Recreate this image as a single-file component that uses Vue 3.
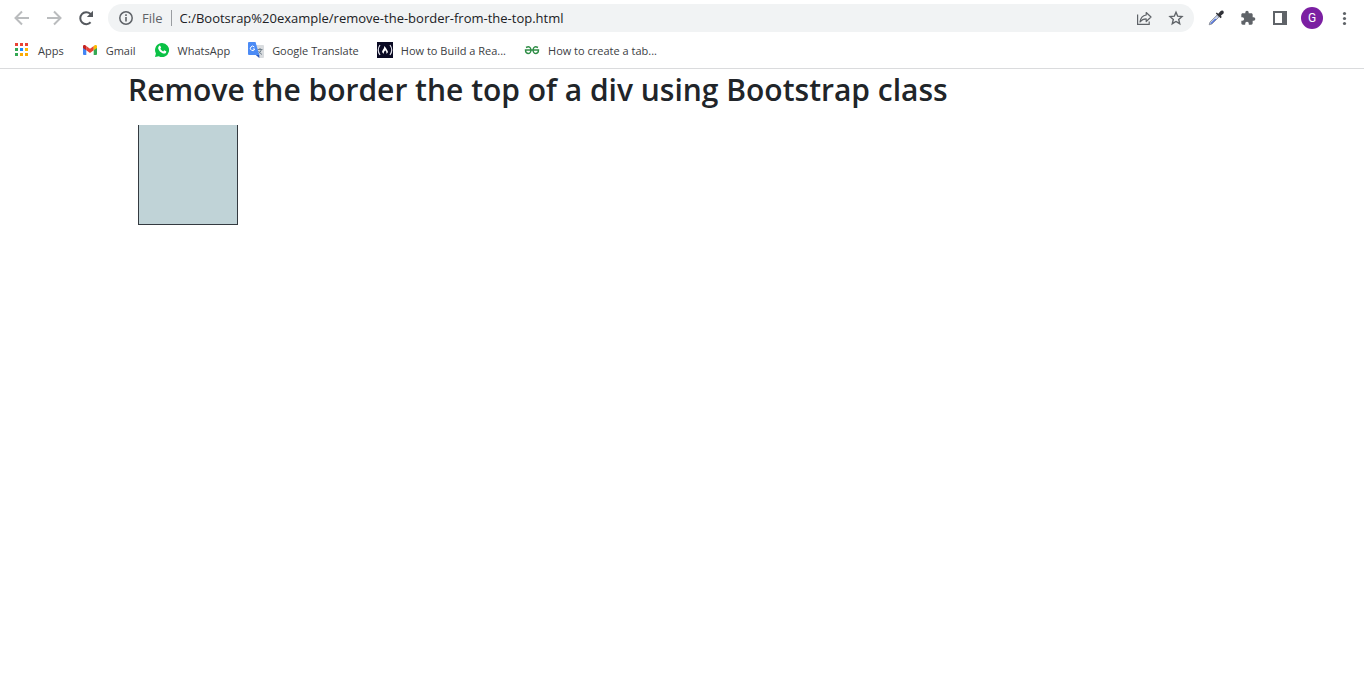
<script setup>
import { ref } from 'vue'

const address = ref('C:/Bootsrap%20example/remove-the-border-from-the-top.html')
const bookmarks = [
  { icon: 'apps', label: 'Apps' },
  { icon: 'gmail', label: 'Gmail' },
  { icon: 'whatsapp', label: 'WhatsApp' },
  { icon: 'translate', label: 'Google Translate' },
  { icon: 'camp', label: 'How to Build a Rea...' },
  { icon: 'geeks', label: 'How to create a tab...' },
]
const appDots = ['#ea4335', '#ea4335', '#ea4335', '#34a853', '#1a8cff', '#fbbc04', '#34a853', '#fbaa04', '#fbaa04']
</script>

<template>
  <div class="browser">
    <header class="chrome">
      <div class="toolbar">
        <nav class="nav" aria-label="Navigation">
          <button class="tool" aria-label="Back">
            <svg width="16" height="16" viewBox="0 0 16 16" fill="none" stroke="#babcbe" stroke-width="2"><path d="M15 8H2.5M8 1.5 1.5 8 8 14.500" /></svg>
          </button>
          <button class="tool" aria-label="Forward">
            <svg width="16" height="16" viewBox="0 0 16 16" fill="none" stroke="#babcbe" stroke-width="2"><path d="M1 8h12.500M8 1.500 14.500 8 8 14.500" /></svg>
          </button>
          <button class="tool" aria-label="Reload">
            <svg width="16" height="16" viewBox="0 0 16 16"><path d="M12.600 12.300A6 6 0 1 1 12.300 3.700L13.500 5" fill="none" stroke="#55595e" stroke-width="2" /><path d="M15 .8V7H8.800z" fill="#55595e" /></svg>
          </button>
        </nav>

        <div class="omnibox">
          <svg class="info" width="16" height="16" viewBox="0 0 16 16"><circle cx="8" cy="8" r="6.200" fill="none" stroke="#5f6368" stroke-width="1.500" /><path d="M7.200 7h1.600v4.500H7.200zM7.200 4.300h1.600v1.600H7.200z" fill="#5f6368" /></svg>
          <label class="scheme" for="address">File</label>
          <span class="divider"></span>
          <input id="address" v-model="address" class="address" type="text" spellcheck="false" />
          <button class="tool" aria-label="Share">
            <svg width="16" height="16" viewBox="0 0 16 16" fill="none" stroke="#5f6368" stroke-width="1.200"><path d="M1.600 4.500v9.900h11.600v-2.800" /><path d="M10.200 2.500 15 7l-4.800 4.500V8.900C7.400 8.900 5.600 9.800 4 12c.5-3.800 2.800-6.500 6.200-7z" stroke-linejoin="round" /></svg>
          </button>
          <button class="tool" aria-label="Bookmark this tab">
            <svg width="16" height="16" viewBox="0 0 16 16" fill="none" stroke="#5f6368" stroke-width="1.400"><path d="m8 2.200 1.700 4 4.300.4-3.300 2.900 1 4.200L8 11.500l-3.700 2.200 1-4.200L2 6.600l4.300-.4z" /></svg>
          </button>
        </div>

        <div class="actions">
          <button class="tool" aria-label="Color picker">
            <svg width="16" height="16" viewBox="0 0 16 16"><path d="m9 5.200-7 6.900-.8 2.700 2.800-.9 6.900-6.800z" fill="#c7d3ee" stroke="#777c89" stroke-width=".8" /><path d="m7 9-4.700 4.600 1.100.1 5-4.800z" fill="#3157d5" /><path d="m7.800 3.500 1-1 1.400 1.300 2-2.400Q13.600.1 15.100.8q1.300 1.600.1 3l-2.400 2 1 1.200-1.200 1.300z" fill="#303238" /></svg>
          </button>
          <button class="tool" aria-label="Extensions">
            <svg width="16" height="16" viewBox="0 0 24 24" fill="#5f6368"><path d="M20.500 11H19V7c0-1.100-.9-2-2-2h-4V3.500a2.500 2.500 0 0 0-5 0V5H4c-1.100 0-2 .9-2 2v3.800h1.500a2.700 2.700 0 0 1 0 5.400H2V20c0 1.100.9 2 2 2h3.800v-1.500a2.700 2.700 0 0 1 5.400 0V22H17c1.100 0 2-.9 2-2v-4h1.500a2.500 2.500 0 0 0 0-5z" /></svg>
          </button>
          <button class="tool" aria-label="Side panel">
            <svg width="16" height="16" viewBox="0 0 16 16"><path d="M1 1h14v14H1zM3 3v10h7V3z" fill="#5f6368" fill-rule="evenodd" /></svg>
          </button>
          <button class="avatar" aria-label="Profile">G</button>
          <button class="tool" aria-label="Menu">
            <svg width="16" height="16" viewBox="0 0 16 16" fill="#5f6368"><circle cx="8.500" cy="3.500" r="1.600" /><circle cx="8.500" cy="8.500" r="1.600" /><circle cx="8.500" cy="13.500" r="1.600" /></svg>
          </button>
        </div>
      </div>

      <nav class="bookmarks" aria-label="Bookmarks">
        <a v-for="mark in bookmarks" :key="mark.label" class="bookmark" href="#">
          <svg v-if="mark.icon === 'apps'" width="16" height="16" viewBox="0 0 16 16">
            <rect v-for="(color, i) in appDots" :key="i" :x="1 + (i % 3) * 5" :y="1 + Math.floor(i / 3) * 5" width="3" height="3" :fill="color" />
          </svg>
          <svg v-else-if="mark.icon === 'gmail'" width="16" height="16" viewBox="0 0 16 16">
            <path d="M1 4v8q0 1 1 1h2.300V5z" fill="#4285f4" />
            <path d="M15 4v8q0 1-1 1h-2.300V5z" fill="#34a853" />
            <path d="M1 4.300Q1 2.500 3 3l1.300 1v4.200L1 6z" fill="#c5221f" />
            <path d="m4.300 4 3.700 2.800L11.700 4v4.200L8 11 4.300 8.200z" fill="#ea4335" />
            <path d="M15 4.300Q15 2.500 13 3l-1.300 1v4.200L15 6z" fill="#fbbc04" />
          </svg>
          <svg v-else-if="mark.icon === 'whatsapp'" width="16" height="16" viewBox="0 0 16 16">
            <path d="M8 1a7 7 0 1 1-3.200 13.200L1 15l.9-3.600A7 7 0 0 1 8 1z" fill="#0ac145" />
            <path d="M5 4q1-.9 1.500.2l.6 1.500-.8 1.100q.9 1.900 2.900 2.600l1-1.100 1.900.9q.4.300 0 1.200-1 1.700-3.100 1Q5.200 9.900 4.200 6.500 4 5 5 4z" fill="#fff" />
          </svg>
          <svg v-else-if="mark.icon === 'translate'" width="16" height="16" viewBox="0 0 16 16">
            <path d="M6 3h9q1 0 1 1v11q0 1-1 1h-4z" fill="#d9dcdf" />
            <path d="M9.500 7.500h5M12 6v1.500M13.500 7.500q-1 3-3.500 4.500M10.500 9q1.500 2.500 3.500 3.500" fill="none" stroke="#72808c" />
            <path d="M1 0h6.500l3.800 13H1q-1 0-1-1V1q0-1 1-1z" fill="#4c8bf5" />
            <path d="m7.800 13 3.500 3v-3z" fill="#2858bd" />
            <path d="M6.300 5A2.200 2.200 0 1 0 6.700 7H4.800" fill="none" stroke="#fff" />
          </svg>
          <svg v-else-if="mark.icon === 'camp'" width="16" height="16" viewBox="0 0 16 16">
            <path d="M0 0h16v16H0z" fill="#0a0a23" />
            <path d="M3 3Q-.5 8 3 13M13 3q3.500 5 0 10" fill="none" stroke="#dfdfe8" stroke-width="1.200" />
            <path d="M7.300 4q2.300 2.200 3.600 5.500.3 1.400-1.500 2.300.5-2.200-1.200-3.500-1.900 1.600-1.300 3.500Q4.300 10.500 5.500 8.500 7.500 6.500 7.300 4z" fill="#fff" />
          </svg>
          <svg v-else width="16" height="16" viewBox="0 0 16 16" fill="none" stroke="#2f8d46" stroke-width="1.400">
            <path d="M2 5.500Q6.500 3.300 7 8q-.2 3.500-3 3.500Q1.500 11.300 1.500 8h13q0 3.300-2.500 3.500Q9.200 11.500 9 8q.5-4.700 5-2.500" />
          </svg>
          <span>{{ mark.label }}</span>
        </a>
      </nav>
    </header>

    <main class="page">
      <h2 class="title">Remove the border the top of a div using Bootstrap class</h2>
      <div class="box"></div>
    </main>
  </div>
</template>

<style>
body {
  margin: 0;
  background: #fff;
}
</style>

<style scoped>
.browser {
  font-family: "Open Sans", "Noto Sans", sans-serif;
  color: #212529;
}

.chrome {
  border-bottom: 1px solid #dadbdd;
}

button {
  padding: 0;
  border: 0;
  background: none;
  font: inherit;
}

svg {
  display: block;
  flex: none;
}

.toolbar {
  display: flex;
  align-items: center;
  height: 36px;
  padding: 0 12px 0 14px;
}

.nav,
.actions {
  display: flex;
  align-items: center;
  gap: 16px;
}

.omnibox {
  display: flex;
  flex: 1;
  align-items: center;
  gap: 16px;
  height: 28px;
  margin: 0 14px;
  padding: 0 10px;
  border-radius: 14px;
  background: #f1f3f4;
  font-size: 13px;
}

.scheme {
  margin-left: -8px;
  color: #5f6368;
}

.divider {
  width: 1px;
  height: 16px;
  margin: 0 -8px;
  background: #9a9da1;
}

.address {
  flex: 1;
  min-width: 0;
  padding: 0;
  border: 0;
  outline: 0;
  background: none;
  color: #202124;
  font: inherit;
}

.avatar {
  width: 22px;
  height: 22px;
  margin: 0 -3px;
  border-radius: 50%;
  background: #7b1fa2;
  color: #fff;
  font-family: Roboto, sans-serif;
  font-size: 12px;
  line-height: 22px;
}

.bookmarks {
  display: flex;
  align-items: center;
  gap: 18px;
  height: 28px;
  padding: 0 14px 4px;
  font-size: 11px;
  white-space: nowrap;
}

.bookmark {
  display: flex;
  align-items: center;
  gap: 8px;
  height: 28px;
  color: #3c4043;
  text-decoration: none;
}

.page {
  max-width: 1108px;
  margin: 0 auto;
}

.title {
  margin: 0;
  padding: 2px 0 8px;
  font-size: 30px;
  font-weight: 600;
  line-height: 38px;
}

.box {
  box-sizing: border-box;
  width: 100px;
  height: 100px;
  margin: 8px 10px;
  border: 1px solid #343a40;
  border-top: 0;
  background: #c0d3d7;
}
</style>
